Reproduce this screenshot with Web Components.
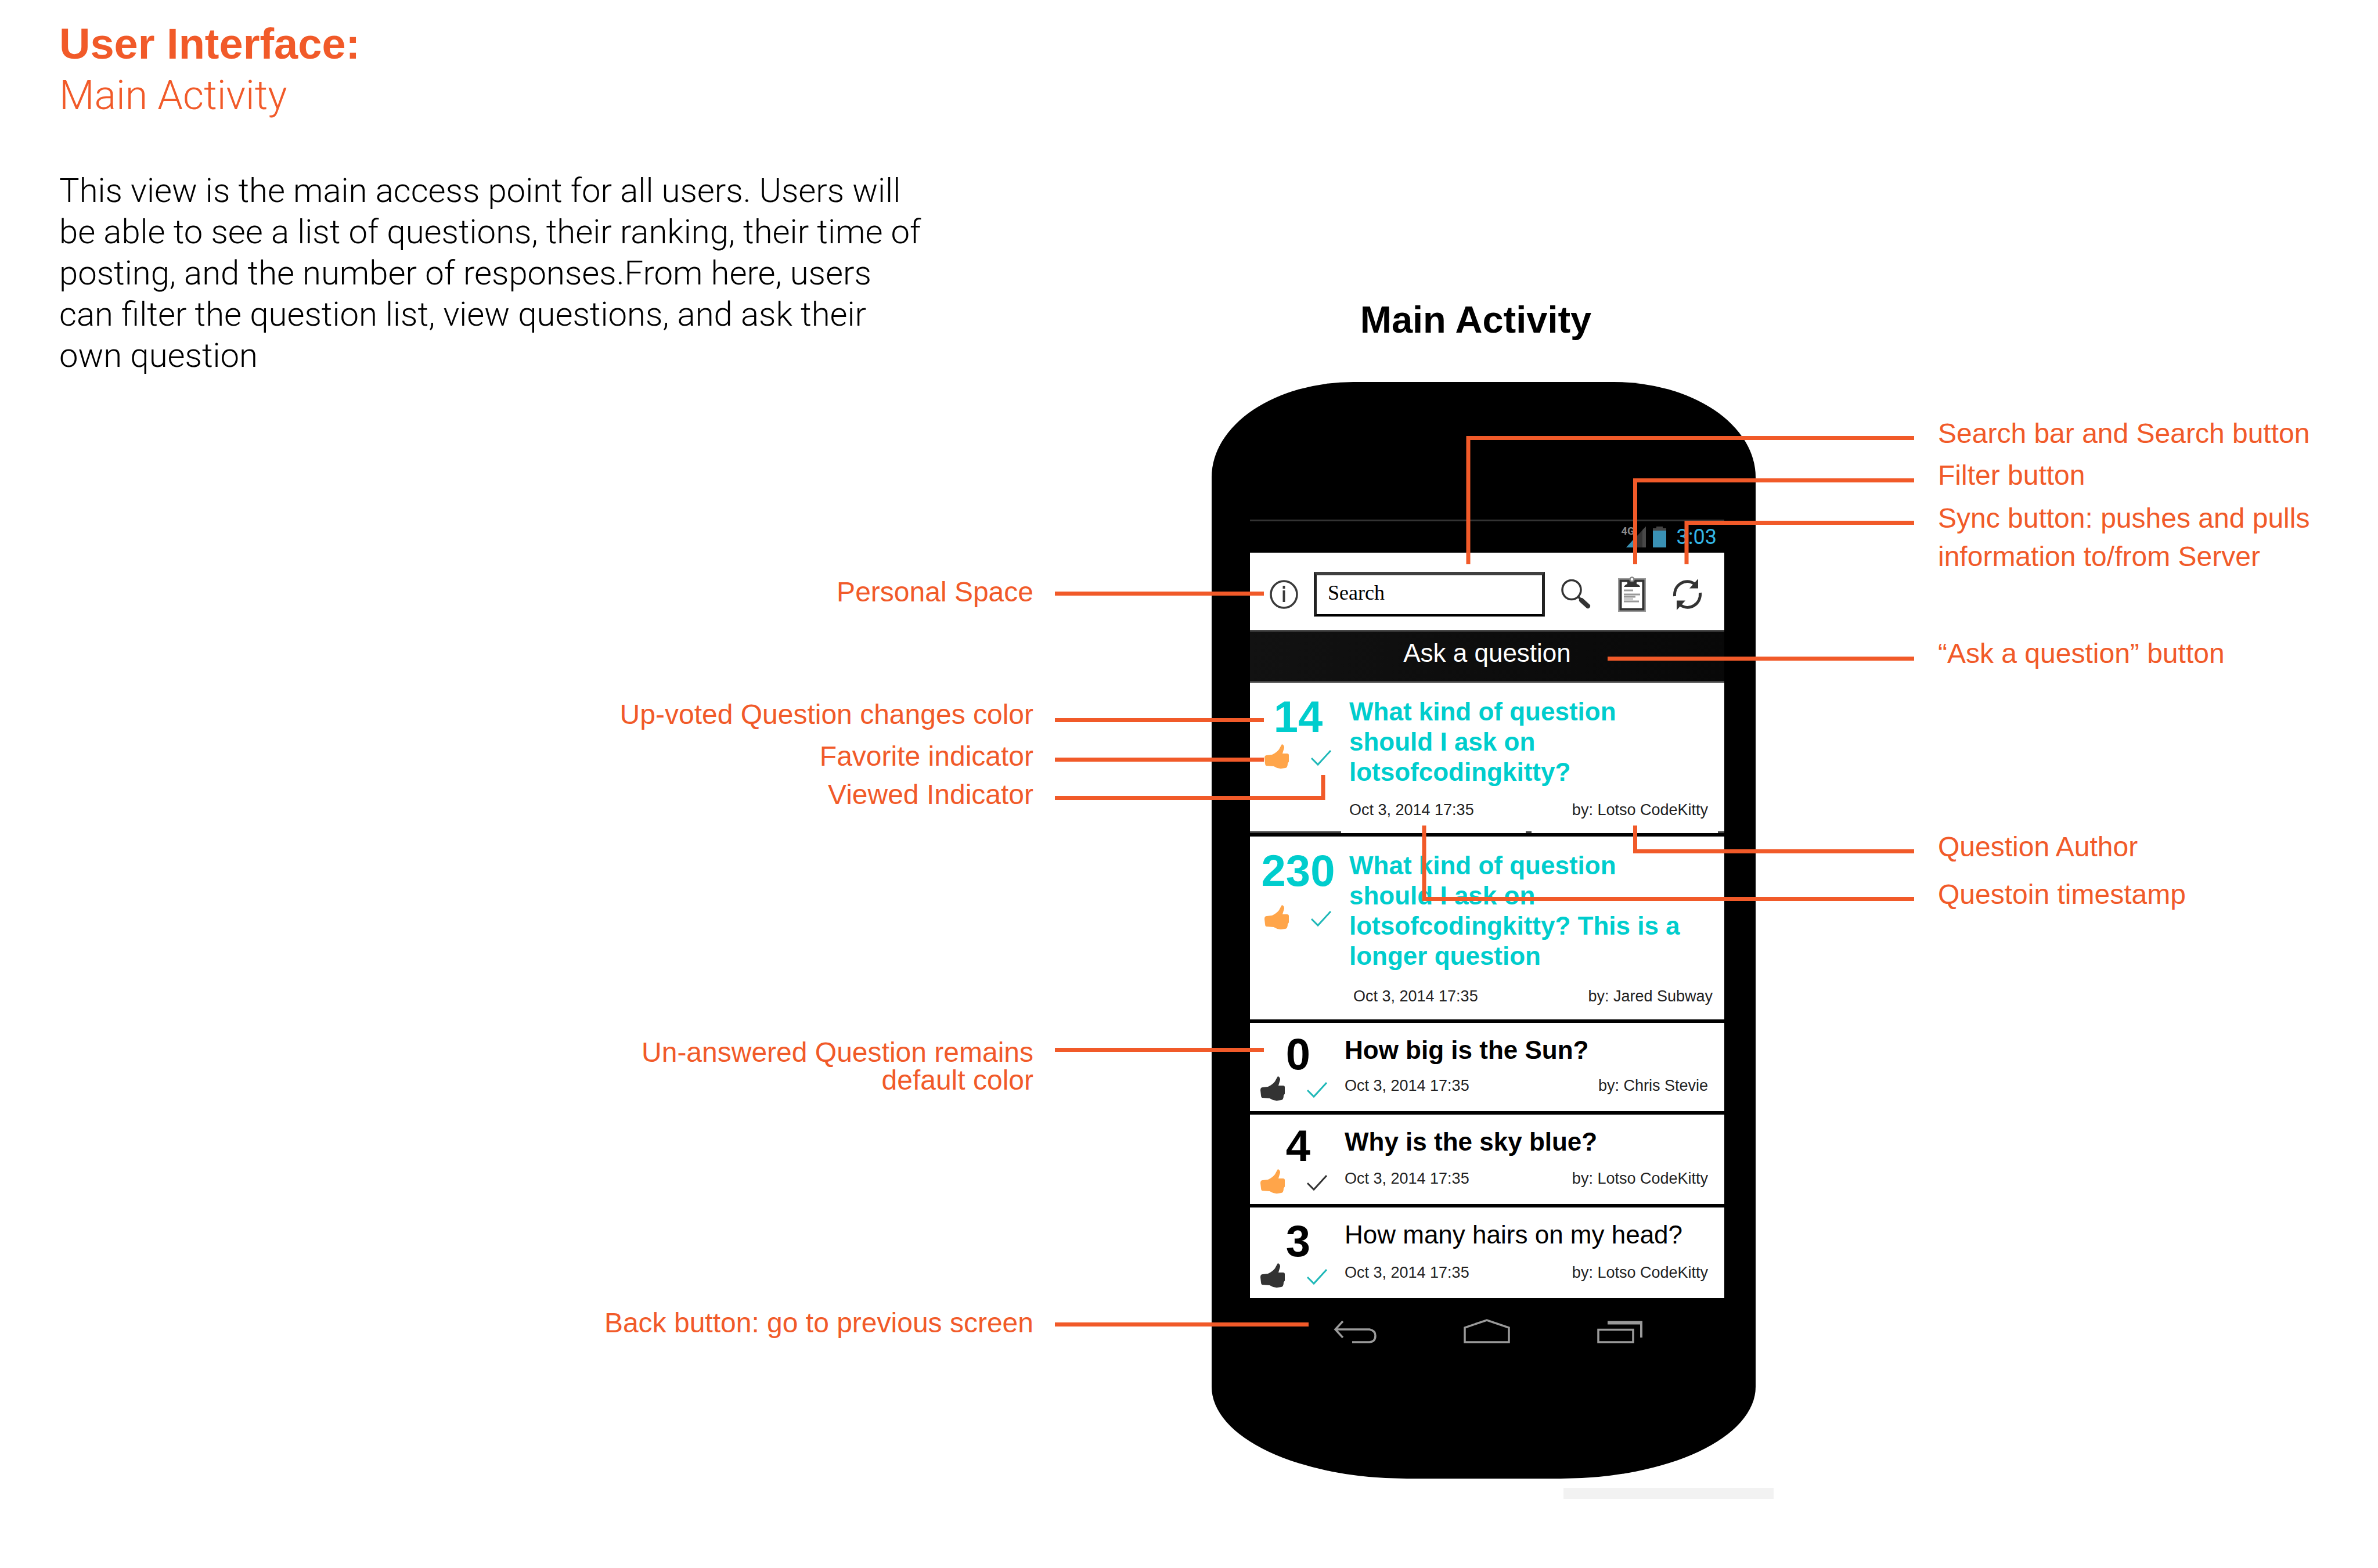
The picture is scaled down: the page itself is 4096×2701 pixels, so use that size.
<!DOCTYPE html>
<html lang="en">
<head>
<meta charset="utf-8">
<title>User Interface: Main Activity</title>
<style>
  html, body { margin: 0; background: #fff; }
  body { font-family: "Liberation Sans", Arial, sans-serif; color: #000; }
</style>
</head>
<body>
<spec-page>
  <spec-intro slot="left">
    <span slot="title">User Interface:</span>
    <span slot="subtitle">Main Activity</span>
    This view is the main access point for all users. Users will be able to see a list of questions, their ranking, their time of posting, and the number of responses.From here, users can filter the question list, view questions, and ask their own question
  </spec-intro>
  <call-out slot="left" style="--before:344px">Personal Space</call-out>
  <call-out slot="left" style="--before:155px">Up-voted Question changes color</call-out>
  <call-out slot="left" style="--before:16px">Favorite indicator</call-out>
  <call-out slot="left" style="--before:10px">Viewed Indicator</call-out>
  <call-out slot="left" style="--before:392px;--leading:48px">Un-answered Question remains<br>default color</call-out>
  <call-out slot="left" style="--before:366px">Back button: go to previous screen</call-out>

  <phone-figure>
    <span slot="caption">Main Activity</span>
    <question-row votes="14" time="Oct 3, 2014 17:35" author="Lotso CodeKitty" tall answered liked viewed style="--row:259px;--marks:9px" notched>What kind of question should I ask on lotsofcodingkitty?</question-row>
    <question-row votes="230" time="Oct 3, 2014 17:35" author="Jared Subway" tall answered liked viewed style="--row:315px;--marks:21px;--meta:0 20px 0 7px">What kind of question should I ask on lotsofcodingkitty? This is a longer question</question-row>
    <question-row votes="0" time="Oct 3, 2014 17:35" author="Chris Stevie" viewed style="--row:150px">How big is the Sun?</question-row>
    <question-row votes="4" time="Oct 3, 2014 17:35" author="Lotso CodeKitty" liked style="--row:154px">Why is the sky blue?</question-row>
    <question-row votes="3" time="Oct 3, 2014 17:35" author="Lotso CodeKitty" viewed read style="--row:156px;--lead:20px">How many hairs on my head?</question-row>
  </phone-figure>

  <call-out slot="right" style="--before:719px">Search bar and Search button</call-out>
  <call-out slot="right" style="--before:16px">Filter button</call-out>
  <call-out slot="right" style="--before:13px;--leading:66px">Sync button: pushes and pulls<br>information to/from Server</call-out>
  <call-out slot="right" style="--before:106px">“Ask a question” button</call-out>
  <call-out slot="right" style="--before:277px">Question Author</call-out>
  <call-out slot="right" style="--before:26px">Questoin timestamp</call-out>
</spec-page>

<script>
const define = (name, html) => customElements.define(name, class extends HTMLElement {
  connectedCallback() {
    if (this.shadowRoot) return;
    const root = this.attachShadow({ mode: "open" });
    root.innerHTML = typeof html === "function" ? html(this) : html;
  }
});

define("spec-page", `
<style>
  :host { display: grid; grid-template-columns: minmax(0, 2077fr) 960px minmax(0, 1059fr); }
  .col { display: flex; flex-direction: column; color: #f15a29; }
  .left { text-align: right; }
  ::slotted(call-out[slot="left"]) { padding-right: 297px; }
  ::slotted(call-out[slot="right"]) { padding-left: 301px; }
</style>
<div class="col left"><slot name="left"></slot></div>
<slot></slot>
<div class="col"><slot name="right"></slot></div>`);

define("call-out", `
<style>
  :host { display: block; margin-top: var(--before); font-size: 48px; line-height: var(--leading, 56px); white-space: nowrap; }
</style><slot></slot>`);

define("spec-intro", `
<style>
  :host { display: block; padding: 32px 0 0 102px; text-align: left; }
  h1, h2, p { margin: 0; font-weight: 300; }
  h1 { font-size: 74px; line-height: 88px; font-weight: 700; }
  h2 { font: 300 70px/88px Roboto, "Liberation Sans", sans-serif; }
  p { margin-top: 85px; max-width: 1496px; font: 300 58px/71px Roboto, "Liberation Sans", sans-serif; color: #000; }
</style>
<h1><slot name="title"></slot></h1>
<h2><slot name="subtitle"></slot></h2>
<p><slot></slot></p>`);

define("phone-figure", `
<style>
  :host { display: block; }
  h2 { margin: 515px 30px 71px 0; font-size: 65px; line-height: 72px; text-align: center; }
  .stage { position: relative; }
  .body { position: relative; margin: 0 13px 0 10px; padding: 237px 54px 233px 66px; background: #000;
    border-radius: 244px 244px 336px 336px / 164px 164px 158px 158px; }
  .key { position: absolute; background: #000; z-index: -1; }
  .power { right: -13px; top: 398px; width: 40px; height: 150px; border-radius: 12px; }
  .volume { left: -10px; top: 543px; width: 40px; height: 353px; border-radius: 12px; }
  .list { display: block; }
  .lines { position: absolute; left: -260px; top: 0; width: 1480px; height: 1888px; pointer-events: none; }
  .mat { height: 19px; margin: 16px -18px 0 616px; background: #f2f2f2; }
</style>
<h2><slot name="caption"></slot></h2>
<div class="stage">
  <div class="body">
    <div class="key power"></div><div class="key volume"></div>
    <status-bar></status-bar>
    <search-bar></search-bar>
    <ask-bar></ask-bar>
    <div class="list"><slot></slot></div>
    <nav-keys></nav-keys>
  </div>
  <svg class="lines" viewBox="1817 658 1480 1888" fill="none" stroke="#f15a29" stroke-width="7" aria-hidden="true">
    <path d="M3297 754.5H2529V972M3297 827.5H2816.500V972M3297 900.5H2905V972M2769 1134.500H3297M2816.500 1422V1466.500H3297M2453 1422V1548.500H3297"/>
    <path d="M1817 1022.500H2177M1817 1240.500H2177M1817 1308.500H2177M1817 1374.500H2279V1335M1817 1808.500H2177M1817 2281.500H2254"/>
  </svg>
</div>
<div class="mat"></div>`);

define("status-bar", `
<style>
  :host { display: flex; justify-content: flex-end; align-items: center; height: 54px; padding-right: 13px; border-top: 3px solid #333; }
  .signal { position: relative; width: 42px; height: 36px; margin-right: 12px; }
  .signal span { position: absolute; left: 0; top: 0; font: 700 18px/16px Roboto, sans-serif; color: #8a8a8a; }
  svg { display: block; }
  .battery { margin-right: 18px; }
  time { font: 400 36px/36px Roboto, sans-serif; color: #33b5e5; }
</style>
<div class="signal"><svg width="42" height="36"><path d="M42 0V36H8z" fill="#333"/><path d="M42 0V36H36V6z" fill="#484848"/><path d="M20 23V36H8z" fill="#3991b5"/></svg><span>4G</span></div>
<svg class="battery" width="23" height="36"><path d="M6 0H17V3H23V12H0V3H6z" fill="#444"/><path d="M0 7H23V36H0z" fill="#3991b5"/></svg>
<time>3:03</time>`);

define("search-bar", `
<style>
  :host { display: flex; align-items: center; gap: 27px; height: 123px; padding: 10px 0 0 34px; background: #fff; }
  button { display: block; padding: 0; border: 0; background: none; }
  svg { display: block; }
  input { box-sizing: border-box; width: 398px; height: 77px; margin: 0; padding: 0 19px 8px; border: 5px solid #222; border-top: 6px solid #404040; border-bottom: 4px solid #000; border-radius: 0;
    background: #fff; color: #000; font: 36px "Liberation Serif", "Times New Roman", serif; }
  .tools { display: flex; align-items: center; gap: 46px; }
</style>
<button aria-label="Personal space"><svg width="49" height="50" fill="none" stroke="#3a3a3a"><ellipse cx="24.500" cy="25" rx="22.500" ry="23" stroke-width="3.500"/><path d="M24.500 10v5M24.500 18v20" stroke-width="4"/></svg></button>
<input type="text" aria-label="Search" value="Search">
<div class="tools">
  <button aria-label="Search"><svg width="53" height="52" fill="none" stroke="#333"><ellipse cx="19" cy="18" rx="16" ry="16.500" stroke-width="3.500"/><path d="M30 29l5 6" stroke-width="4"/><path d="M36 36L47 46" stroke-width="8" stroke-linecap="round"/></svg></button>
  <button aria-label="Filter"><svg width="48" height="61" fill="none"><path d="M1.500 4.500H46.500V59.500H1.500z" stroke="#999" stroke-width="3"/><path d="M4.500 7.500H43.500V56.500H4.500z" stroke="#333" stroke-width="4"/><path d="M10 18Q12 14 16 13V7H32V13Q37 14 38 18z" fill="#333"/><circle cx="24" cy="5" r="3.500" fill="#fff" stroke="#888" stroke-width="2.500"/><path d="M10 24h16M10 31h28M10 35h20M10 43h26" stroke="#999" stroke-width="3"/><path d="M10 39h16" stroke="#ccc" stroke-width="5"/></svg></button>
  <button aria-label="Sync"><svg width="51" height="56" fill="none" stroke="#333" stroke-width="5"><path d="M3.500 31C2 11 22 -1 38 10"/><path d="M44 1V17.500H29z" fill="#333" stroke="none"/><path d="M47.500 25C49 45 29 57 13 46"/><path d="M7 55V38.500H22z" fill="#333" stroke="none"/></svg></button>
</div>`);

define("ask-bar", `
<style>
  :host { display: block; }
  button { display: block; width: 100%; height: 91px; margin: 0; padding: 0 0 11px; border: 0; border-top: 3px solid #444; border-bottom: 3px solid #444; border-radius: 0;
    background: linear-gradient(100deg, #121212, #080808); color: #fff; font: 44px "Liberation Sans", sans-serif; }
</style><button>Ask a question</button>`);

define("question-row", el => {
  const tick = el.hasAttribute("viewed") ? "#1fb8b8" : "#333";
  const thumb = el.hasAttribute("liked") ? "#ffa54a" : "#333";
  return `
<style>
  :host { display: flex; box-sizing: content-box; min-height: var(--row); background: #fff; border-bottom: 6px solid #000; }
  :host(:last-of-type) { border-bottom: 0; }
  :host([notched]) { background: linear-gradient(#444, #444) 0 100% / 157px 3px no-repeat, linear-gradient(#444, #444) 475px 100% / 10px 3px no-repeat, linear-gradient(#444, #444) 100% 100% / 11px 3px no-repeat, #fff; background-origin: padding-box; }
  .votes { flex: none; display: flex; flex-direction: column; justify-content: space-between; width: 130px; padding: var(--lead, 16px) 15px 18px 18px; }
  .count { margin: 0; font-size: 76px; line-height: 76px; font-weight: 700; text-align: center; }
  .marks { display: flex; align-items: flex-end; gap: 38px; height: 42px; }
  .marks svg { flex: none; display: block; }
  .tick { margin-bottom: 4px; }
  .text { flex: 1; display: flex; flex-direction: column; padding: 21px 0 28px; }
  h3 { margin: 0; padding-right: 28px; font-size: 44px; line-height: 52px; font-weight: 700; }
  .meta { display: flex; justify-content: space-between; margin-top: auto; padding: var(--meta, 0 28px 0 0); font-size: 27px; line-height: 32px; color: #222; }
  :host([answered]) .count, :host([answered]) h3 { color: #00cdcd; }
  :host([read]) h3 { font-weight: 400; }
  :host([tall]) .votes { justify-content: flex-start; align-items: center; gap: var(--marks); width: 116px; padding: 21px 30px 0 25px; }
  :host([tall]) .text { padding: 24px 0; }
  :host([tall]) h3 { padding-right: 44px; }
</style>
<div class="votes">
  <p class="count">${el.getAttribute("votes")}</p>
  <div class="marks">
    <svg width="42" height="42"><path d="M30 0Q34 1 34 6L31 16H39Q42 16 42 19V30L40 33Q40 40 36 41L28 42L22 41L16 38L3 37Q1 36 1 33L0 24Q0 19 4 19L13 18Q20 15 25 9Q27 5 30 0z" fill="${thumb}"/></svg>
    <svg class="tick" width="36" height="29" fill="none" stroke="${tick}" stroke-width="3"><path d="M1 15L12 26L34 2"/></svg>
  </div>
</div>
<div class="text">
  <h3><slot></slot></h3>
  <div class="meta"><time>${el.getAttribute("time")}</time><span>by: ${el.getAttribute("author")}</span></div>
</div>`;
});

define("nav-keys", `
<style>
  :host { display: flex; gap: 150px; padding: 36px 0 0 144px; }
  button { display: block; padding: 0; border: 0; background: none; }
  svg { display: block; }
</style>
<button aria-label="Back"><svg width="74" height="42" fill="none" stroke="#9a9a9a" stroke-width="3.500"><path d="M16 4L3 18L16 32M3 18H62Q72 20 72 29Q72 39 62 40H32"/></svg></button>
<button aria-label="Home"><svg width="80" height="42" fill="none" stroke="#9a9a9a" stroke-width="3.500"><path d="M2 40V15L40 2L78 15V40z"/></svg></button>
<button aria-label="Recent apps"><svg width="79" height="42" fill="none" stroke="#9a9a9a" stroke-width="3.500"><path d="M2 18.500H62V40H2z"/><path d="M18 7H76V32" stroke-width="4"/><path d="M18 6.500H78" stroke-width="6"/></svg></button>`);
</script>
</body>
</html>
